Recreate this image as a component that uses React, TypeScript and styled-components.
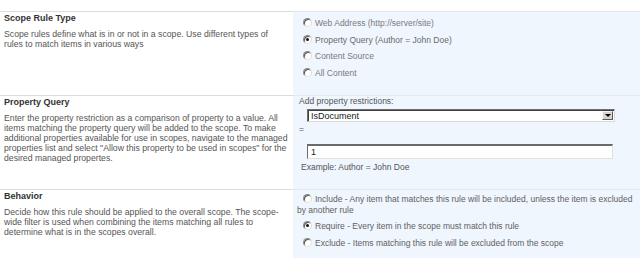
import * as React from "react";
import styled, { createGlobalStyle } from "styled-components";

const GlobalStyle = createGlobalStyle`
  html, body {
    margin: 0;
    padding: 0;
    background: #ffffff;
  }
  body {
    font-family: "Liberation Sans", Arial, sans-serif;
    font-size: 8.5px;
    color: #4c4c4c;
  }
`;

const PANEL = "#eff6fe";

const Page = styled.div`
  width: 640px;
  height: 258px;
  overflow: hidden;
  padding-top: 11px;
  box-sizing: border-box;
`;

const Section = styled.div`
  display: grid;
  grid-template-columns: 293px 1fr;
`;

const InfoCell = styled.div`
  border-top: 1px solid #dcdcdc;
  padding: 1px 3px 0 4px;
`;

const ControlCell = styled.div<{ $pt: number; $pb: number }>`
  background: ${PANEL};
  border-top: 1px solid #e3e9f0;
  padding: ${(p) => p.$pt}px 2px ${(p) => p.$pb}px 4px;
  color: #666666;
`;

const Heading = styled.div`
  font-weight: bold;
  font-size: 9px;
  line-height: 10px;
  color: #333333;
`;

const Description = styled.div`
  margin-top: 6px;
  font-size: 8.7px;
  line-height: 10px;
  color: #555555;
`;

const RadioCircle = styled.span<{ $checked?: boolean }>`
  display: inline-block;
  position: relative;
  width: 9px;
  height: 9px;
  box-sizing: border-box;
  border-radius: 50%;
  border: 1px solid;
  border-color: #8a8a8a #dcdcdc #e6e6e6 #8a8a8a;
  box-shadow: inset 1px 1px 0 #555555;
  background: #ffffff;
  margin: 0 3px 0 6px;
  vertical-align: -1px;

  &::after {
    content: "";
    display: ${(p) => (p.$checked ? "block" : "none")};
    position: absolute;
    left: 2px;
    top: 2px;
    width: 3px;
    height: 3px;
    border-radius: 50%;
    background: #111111;
  }
`;

const TypeOption = styled.div<{ $faded?: boolean }>`
  line-height: 16.5px;
  color: ${(p) => (p.$faded ? "#7a7a7a" : "#6a6a6a")};
`;

const BehaviorOption = styled.div`
  line-height: 10.5px;
  color: #5f5f5f;
  & + & {
    margin-top: 6px;
  }
`;

const FieldLabel = styled.div`
  line-height: 10px;
  padding-left: 2px;
  color: #555555;
`;

const SelectBox = styled.div`
  margin: 3px 0 0 10px;
  width: 308px;
  height: 13px;
  box-sizing: border-box;
  display: flex;
  align-items: center;
  background: #ffffff;
  border: 1px solid;
  border-color: #6e6e6e #d8d8d8 #d8d8d8 #6e6e6e;
  box-shadow: inset 1px 1px 0 #404040;
  color: #222222;
  font-size: 9px;
`;

const SelectText = styled.span`
  flex: 1;
  padding-left: 3px;
`;

const DropButton = styled.span`
  width: 11px;
  height: 9px;
  margin-right: 1px;
  box-sizing: border-box;
  display: flex;
  align-items: center;
  justify-content: center;
  background: #d6d3ce;
  border: 1px solid;
  border-color: #f4f4f4 #5a5a5a #5a5a5a #f4f4f4;

  &::after {
    content: "";
    border-left: 3px solid transparent;
    border-right: 3px solid transparent;
    border-top: 3px solid #000000;
  }
`;

const Equals = styled.div`
  margin-top: 2px;
  line-height: 10px;
  padding-left: 2px;
  color: #555555;
`;

const TextInput = styled.input`
  display: block;
  margin: 10px 0 0 10px;
  width: 306px;
  height: 15px;
  box-sizing: border-box;
  padding: 0 3px;
  border: 1px solid;
  border-color: #6a6a6a #e0e0e0 #e0e0e0 #6a6a6a;
  border-top-width: 2px;
  background: #ffffff;
  font-family: "Liberation Sans", Arial, sans-serif;
  font-size: 9px;
  color: #222222;
  outline: none;
`;

const Example = styled.div`
  margin-top: 3px;
  line-height: 10px;
  padding-left: 4px;
  color: #555555;
`;

const scopeTypes = [
  { label: "Web Address (http://server/site)", checked: false },
  { label: "Property Query (Author = John Doe)", checked: true },
  { label: "Content Source", checked: false },
  { label: "All Content", checked: false },
];

const behaviors = [
  {
    label:
      "Include - Any item that matches this rule will be included, unless the item is excluded by another rule",
    checked: false,
  },
  { label: "Require - Every item in the scope must match this rule", checked: true },
  { label: "Exclude - Items matching this rule will be excluded from the scope", checked: false },
];

export default function App() {
  return (
    <>
      <GlobalStyle />
      <Page>
        <Section>
          <InfoCell>
            <Heading>Scope Rule Type</Heading>
            <Description>
              Scope rules define what is in or not in a scope. Use different types of
              <br />
              rules to match items in various ways
            </Description>
          </InfoCell>
          <ControlCell $pt={3} $pb={14}>
            {scopeTypes.map((t) => (
              <TypeOption key={t.label} $faded={!t.checked}>
                <RadioCircle $checked={t.checked} />
                {t.label}
              </TypeOption>
            ))}
          </ControlCell>
        </Section>

        <Section>
          <InfoCell>
            <Heading>Property Query</Heading>
            <Description>
              Enter the property restriction as a comparison of property to a value. All items
              matching the property query will be added to the scope. To make additional
              properties available for use in scopes, navigate to the managed properties list and
              select "Allow this property to be used in scopes" for the desired managed propertes.
            </Description>
          </InfoCell>
          <ControlCell $pt={0} $pb={17}>
            <FieldLabel>Add property restrictions:</FieldLabel>
            <SelectBox>
              <SelectText>IsDocument</SelectText>
              <DropButton />
            </SelectBox>
            <Equals>=</Equals>
            <TextInput defaultValue="1" />
            <Example>Example: Author = John Doe</Example>
          </ControlCell>
        </Section>

        <Section>
          <InfoCell>
            <Heading>Behavior</Heading>
            <Description>
              Decide how this rule should be applied to the overall scope. The scope-wide filter is
              used when combining the items matching all rules to determine what is in the scopes
              overall.
            </Description>
          </InfoCell>
          <ControlCell $pt={4} $pb={20}>
            {behaviors.map((b) => (
              <BehaviorOption key={b.label}>
                <RadioCircle $checked={b.checked} />
                {b.label}
              </BehaviorOption>
            ))}
          </ControlCell>
        </Section>
      </Page>
    </>
  );
}
